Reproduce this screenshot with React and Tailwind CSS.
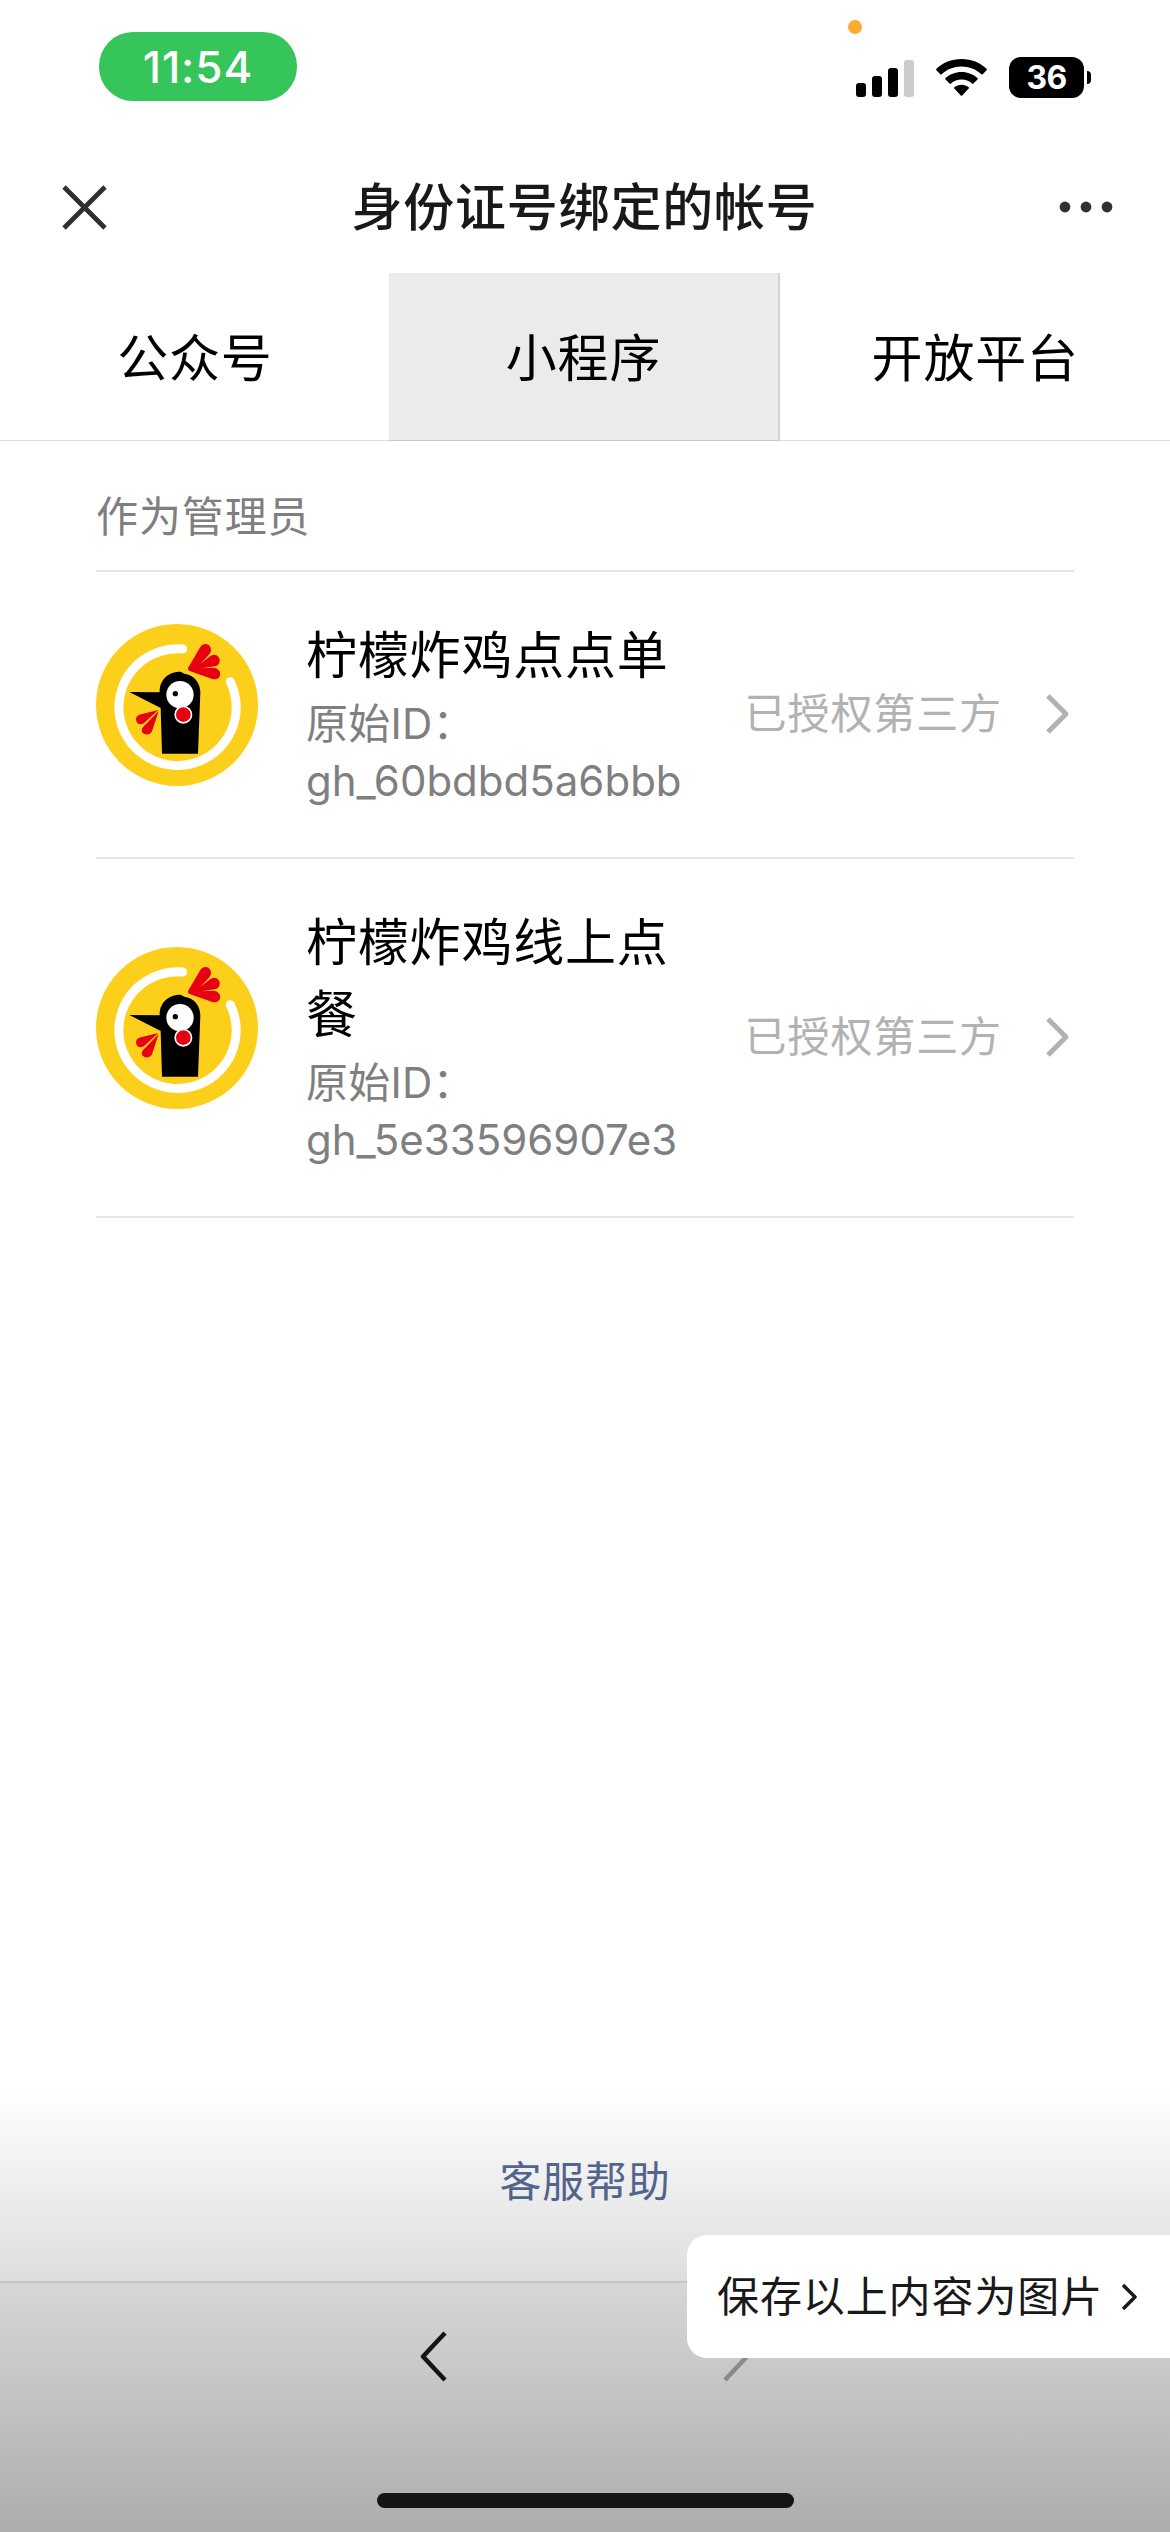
const TABS = ['公众号', '小程序', '开放平台']

const ACCOUNTS = [
    { id: 'gh_60bdbd5a6bbb', name: '柠檬炸鸡点点单', status: '已授权第三方' },
    { id: 'gh_5e33596907e3', name: '柠檬炸鸡线上点餐', status: '已授权第三方' },
]

function Chevron({ className, strokeWidth, points, viewBox }) {
    return (
        <svg className={className} viewBox={viewBox} fill="none" stroke="currentColor" strokeWidth={strokeWidth} strokeLinejoin="round">
            <polyline points={points} />
        </svg>
    )
}

function StatusBar() {
    return (
        <div className="relative flex h-[144px] items-start justify-between pl-[99px] pr-[79px]">
            <div className="mt-8 flex h-[69px] w-[198px] items-center justify-center rounded-[34px] bg-[#35c55a] text-[44px] font-medium tracking-[0.9px] text-white">
                11:54
            </div>
            <div className="absolute left-[848px] top-[20px] size-[14px] rounded-full bg-[#ffab33]" />
            <div className="mt-[57px] flex h-[41px] items-center">
                <svg className="mr-[22px] h-[38px] w-[58px]" viewBox="0 0 58 38">
                    <rect x="0" y="24" width="10" height="14" rx="3" />
                    <rect x="16" y="17" width="10" height="21" rx="3" />
                    <rect x="32" y="9" width="10" height="29" rx="3" />
                    <rect x="48" y="1" width="10" height="37" rx="3" fill="#ccc" />
                </svg>
                <svg className="mr-[22px] h-[37px] w-[51px]" viewBox="0 0 51 37">
                    <path d="M25.500 0C35.500 0 44.400 3.700 50.600 9.800Q51.200 10.500 50.600 11.200L46.700 15.200Q46 15.900 45.300 15.200C40 10.300 33.100 7.500 25.500 7.500S11 10.300 5.700 15.200Q5 15.900 4.300 15.200L.4 11.200Q-.2 10.500 .4 9.800C6.600 3.700 15.500 0 25.500 0Z" />
                    <path d="M25.500 12.900C31.800 12.900 37.300 15.200 41.500 19Q42.200 19.700 41.500 20.400L37.400 24.500Q36.700 25.200 36 24.600C33.200 22 29.600 20.500 25.500 20.500S17.800 22 15 24.600Q14.300 25.200 13.600 24.500L9.500 20.400Q8.800 19.700 9.500 19C13.700 15.200 19.200 12.900 25.500 12.900Z" />
                    <path d="M25.500 25.700C28.300 25.700 30.800 26.600 32.700 28.200Q33.400 28.900 32.700 29.600L26.200 36.400Q25.500 37 24.800 36.400L18.300 29.600Q17.600 28.900 18.300 28.200C20.200 26.600 22.700 25.700 25.500 25.700Z" />
                </svg>
                <div className="flex h-[41px] w-[75px] items-center justify-center rounded-[12px] bg-black text-[32px] font-bold tracking-[-0.8px] text-white">
                    36
                </div>
                <div className="ml-[3px] h-[13px] w-[4px] rounded-r-full bg-black" />
            </div>
        </div>
    )
}

function NavBar() {
    return (
        <div className="flex h-[129px] items-center justify-between px-[56px] pb-[3px] text-[#303030]">
            <svg className="ml-[6px] size-[45px]" viewBox="0 0 45 45" stroke="currentColor" strokeWidth="4.800">
                <path d="M2 2L43 43M43 2L2 43" />
            </svg>
            <h1 className="-mr-[4px] pt-[2px] text-[51px] font-medium leading-[72px] tracking-[0.8px] text-[#191919]">身份证号绑定的帐号</h1>
            <svg className="h-[12px] w-[56px]" viewBox="0 0 56 12" fill="currentColor">
                <circle cx="7" cy="6" r="5.400" />
                <circle cx="28" cy="6" r="5.400" />
                <circle cx="49" cy="6" r="5.400" />
            </svg>
        </div>
    )
}

function Tabs({ active }) {
    return (
        <div className="flex h-[168px] border-b border-[#dfdfdf]">
            {TABS.map(tab => (
                <div
                    key={tab}
                    className={`flex flex-1 items-center justify-center pt-[5px] text-[51px] tracking-[0.8px] text-black ${tab === active ? '-mb-px ml-[-1px] border-b border-r-2 border-b-[#c8c8c8] border-r-[#d3d3d3] bg-[#ebebeb]' : ''}`}
                >
                    {tab}
                </div>
            ))}
        </div>
    )
}

function ChickenLogo() {
    return (
        <svg className="mt-[-19px] size-[162px] shrink-0" viewBox="48 72 486 486">
            <circle cx="291" cy="315" r="243" fill="#fcd01a" />
            <path d="M308 147A176 175 0 1 0 451 245" fill="none" stroke="#fff" strokeWidth="27" strokeLinecap="round" />
            <path d="M148 276L239 277C238 237 267 215 302 215L313 221C341 224 361 248 361 277L354 461H246L242 324Z" />
            <circle cx="300" cy="284" r="41" fill="#fff" />
            <circle cx="286" cy="281" r="8" />
            <circle cx="310" cy="344" r="24.500" fill="#e60012" stroke="#fff" strokeWidth="5" />
            <g fill="#e60012">
                <path d="M324 204L361 141C370 126 393 131 393 150C393 156 389 161 386 165L361 192L390 169C405 157 421 169 419 184C418 193 412 198 404 199L366 205L399 203C416 204 423 216 420 226C418 236 408 240 397 237L329 213Q322 210 324 204Z" />
                <path d="M235 330L186 342C171 345 166 353 169 363C173 374 184 375 193 368Z" />
                <path d="M236 333L199 371C184 384 182 393 190 400C200 407 212 403 216 394Z" />
            </g>
        </svg>
    )
}

function AccountRow({ account }) {
    return (
        <div className="flex items-center border-b-2 border-[#e6e6e6] py-12">
            <ChickenLogo />
            <div className="ml-12 w-[392px]">
                <div className="text-[51px] leading-[72px] tracking-[0.8px] text-black">{account.name}</div>
                <div className="pt-[3px] text-[42px] leading-[57px] text-[#7f7f7f]">
                    <div className="tracking-[0.2px]">原始ID：</div>
                    <div>{account.id}</div>
                </div>
            </div>
            <div className="ml-auto mt-[-1px] flex items-center text-[#b2b2b2]">
                <span className="text-[42px] leading-[58px] tracking-[0.9px]">{account.status}</span>
                <Chevron className="ml-[44px] mr-[4px] h-[40px] w-[24px]" viewBox="0 0 24 40" points="2,2 20,20 2,38" strokeWidth="5" />
            </div>
        </div>
    )
}

export default function App() {
    return (
        <div className="relative flex h-[2532px] w-[1170px] flex-col overflow-hidden bg-white font-[Inter,'Noto_Sans_CJK_SC',sans-serif]">
            <StatusBar />
            <NavBar />
            <Tabs active="小程序" />

            <div className="flex flex-1 flex-col px-24">
                <div className="border-b-2 border-[#e6e6e6] pb-[24px] pt-[47px] text-[42px] leading-[58px] tracking-[0.9px] text-[#7f7f7f]">
                    作为管理员
                </div>
                {ACCOUNTS.map(account => (
                    <AccountRow key={account.id} account={account} />
                ))}
                <div className="mb-[70px] mt-auto text-center text-[42px] leading-[58px] tracking-[0.8px] text-[#576b95]">客服帮助</div>
            </div>

            <div className="h-[251px] border-t-2 border-[#e2e2e2] bg-[#f7f7f7]">
                <div className="flex justify-center gap-[276px] pt-[48px]">
                    <Chevron className="h-[51px] w-[27px] text-[#191919]" viewBox="0 0 27 51" points="25,2 3,25.5 25,49" strokeWidth="4.500" />
                    <Chevron className="h-[51px] w-[27px] text-[#aaaaaa]" viewBox="0 0 27 51" points="2,2 24,25.5 2,49" strokeWidth="4.500" />
                </div>
            </div>

            {/* shade behind the save prompt */}
            <div className="pointer-events-none absolute inset-x-0 bottom-0 h-[445px] bg-linear-to-b from-black/0 to-black/30" />
            <div className="absolute bottom-[24px] left-[377px] h-[15px] w-[417px] rounded-full bg-[#151515]" />
            <div className="absolute right-0 top-[2235px] flex h-[123px] w-[483px] items-center rounded-l-[20px] bg-white pl-[30px] text-[42px] tracking-[0.9px] text-[#191919]">
                保存以上内容为图片
                <Chevron className="ml-[18px] h-[28px] w-[18px]" viewBox="0 0 18 28" points="2,2 14,14 2,26" strokeWidth="3.500" />
            </div>
        </div>
    )
}
